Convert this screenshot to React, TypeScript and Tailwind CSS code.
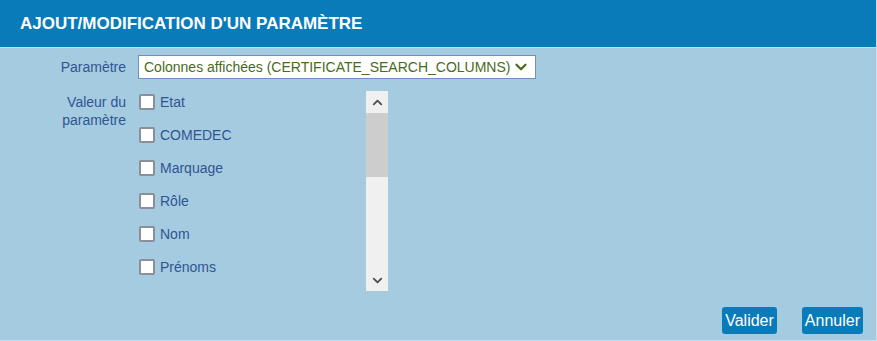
import { ChevronDown, ChevronUp } from 'lucide-react';

const columns = ['Etat', 'COMEDEC', 'Marquage', 'Rôle', 'Nom', 'Prénoms'];

const App = () => {
  return (
    <div
      className="w-[877px] h-[341px] bg-[#a5cbe0] border-r border-b border-[#c9e0ec] flex flex-col"
      style={{ fontFamily: '"Liberation Sans", Arial, sans-serif' }}
    >
      {/* Title bar */}
      <div className="h-[48px] bg-[#0a7bb9] border-b border-[#c3dded] flex items-center px-5">
        <h1 className="text-white font-bold text-[17px]">
          AJOUT/MODIFICATION D'UN PARAMÈTRE
        </h1>
      </div>

      {/* Form */}
      <div className="flex-1 flex flex-col pt-[7px]">
        <div className="flex items-center">
          <label className="w-[126px] text-right text-[14px] text-[#2f5592]">Paramètre</label>
          <div className="ml-[12px] w-[398px] h-[24px] bg-white border border-[#6f8fc4] flex items-center justify-between pl-[5px] pr-[5px]">
            <span className="text-[14px] text-[#4a6b1c]">Colonnes affichées (CERTIFICATE_SEARCH_COLUMNS)</span>
            <ChevronDown className="w-[18px] h-[18px] text-[#4a6b1c]" strokeWidth={3} />
          </div>
        </div>

        <div className="flex mt-[12px]">
          <label className="w-[126px] text-right text-[14px] leading-[18px] text-[#2f5592] pt-[2px]">
            Valeur du
            <br />
            paramètre
          </label>
          <div className="ml-[12px] w-[250px] h-[200px] flex">
            <ul className="flex-1 flex flex-col gap-[17px] pt-[3px] pl-[1px]">
              {columns.map(c => (
                <li key={c} className="flex items-center gap-[5px] h-[16px]">
                  <span className="w-[16px] h-[16px] bg-white border-2 border-[#8b8f99] rounded-[2px]" />
                  <span className="text-[14px] text-[#2f5592]">{c}</span>
                </li>
              ))}
            </ul>
            <div className="w-[22px] h-[200px] bg-[#f0f0f0] flex flex-col">
              <div className="h-[22px] flex items-center justify-center">
                <ChevronUp className="w-[15px] h-[15px] text-[#505050]" strokeWidth={3} />
              </div>
              <div className="h-[64px] bg-[#cdcdcd]" />
              <div className="flex-1" />
              <div className="h-[22px] flex items-center justify-center">
                <ChevronDown className="w-[15px] h-[15px] text-[#505050]" strokeWidth={3} />
              </div>
            </div>
          </div>
        </div>

        <div className="flex justify-end gap-[25px] pr-[13px] mt-auto mb-[6px]">
          <button className="h-[27px] px-[3px] bg-[#0a7bb9] text-white text-[16px] rounded-[3px]">Valider</button>
          <button className="h-[27px] px-[3px] bg-[#0a7bb9] text-white text-[16px] rounded-[3px]">Annuler</button>
        </div>
      </div>
    </div>
  );
};

export default App;
